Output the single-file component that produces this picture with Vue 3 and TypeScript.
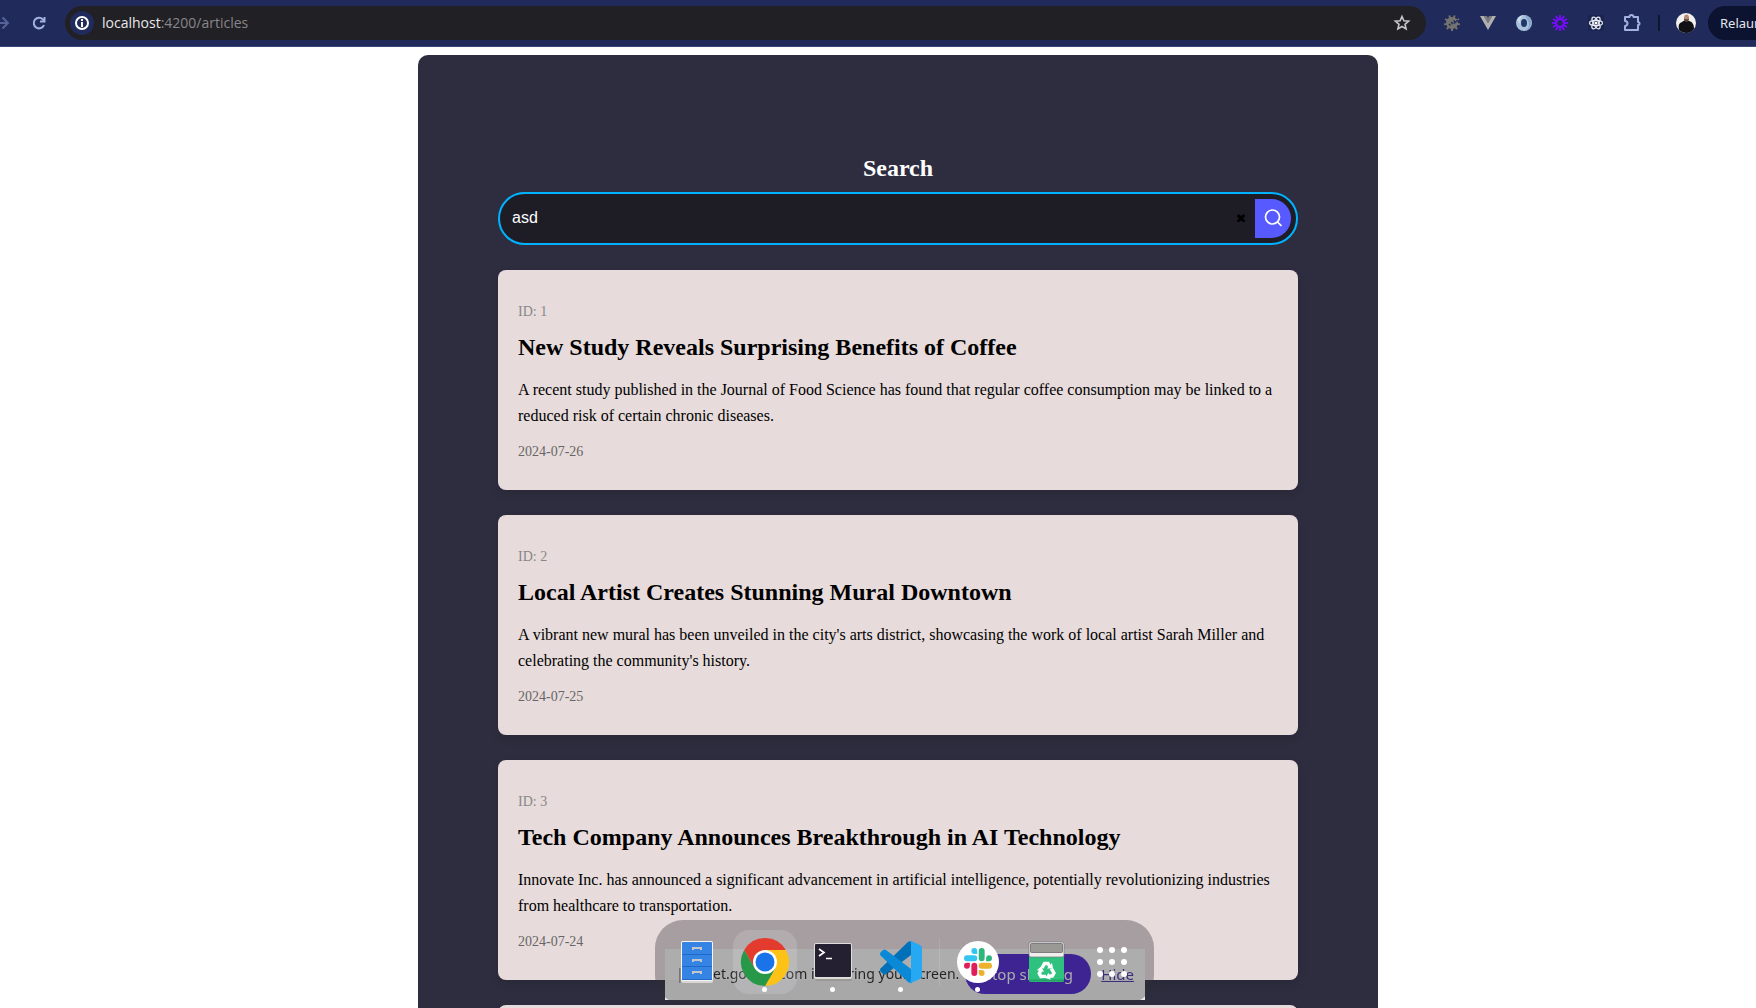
<script setup lang="ts">
import { ref } from 'vue'

interface Article {
  id: number
  title: string
  body: string
  date: string
}

const query = ref('asd')

const articles: Article[] = [
  {
    id: 1,
    title: 'New Study Reveals Surprising Benefits of Coffee',
    body: 'A recent study published in the Journal of Food Science has found that regular coffee consumption may be linked to a reduced risk of certain chronic diseases.',
    date: '2024-07-26',
  },
  {
    id: 2,
    title: 'Local Artist Creates Stunning Mural Downtown',
    body: "A vibrant new mural has been unveiled in the city's arts district, showcasing the work of local artist Sarah Miller and celebrating the community's history.",
    date: '2024-07-25',
  },
  {
    id: 3,
    title: 'Tech Company Announces Breakthrough in AI Technology',
    body: 'Innovate Inc. has announced a significant advancement in artificial intelligence, potentially revolutionizing industries from healthcare to transportation.',
    date: '2024-07-24',
  },
]

const rays = Array.from({ length: 12 }, (_, i) => i * 30)
const teeth = Array.from({ length: 9 }, (_, i) => i * 40)
const gridDots = [20, 32, 44].flatMap((y) => [18, 30, 42].map((x) => ({ x, y })))
</script>

<template>
  <div class="screen">
    <header class="toolbar">
      <button class="nav forward" type="button" aria-label="Forward">
        <svg width="10" height="14" viewBox="0 0 10 14" fill="none" stroke="#56639a" stroke-width="2"><path d="M0 7h8M2.500 1.500L8 7l-5.500 5.500" /></svg>
      </button>
      <button class="nav reload" type="button" aria-label="Reload">
        <svg width="16" height="16" viewBox="0 0 16 16" fill="none" stroke="#a3b1e0" stroke-width="2"><path d="M13 10a5.300 5.300 0 1 1-1-5.500L13.500 6" /><path d="M13.500 2v4.500H9" /></svg>
      </button>
      <div class="address">
        <span class="site-info">
          <svg width="14" height="14" viewBox="0 0 14 14"><circle cx="7" cy="7" r="6" fill="none" stroke="#fff" stroke-width="2" /><path d="M7 6v5M7 3v2" stroke="#fff" stroke-width="2" /></svg>
        </span>
        <span class="url"><b>localhost</b>:4200/articles</span>
        <button class="nav star" type="button" aria-label="Bookmark">
          <svg width="18" height="18" viewBox="0 0 18 18" fill="none" stroke="#c7c7c9" stroke-width="1.600"><path d="M9 2.500l1.900 4.300 4.700.400-3.600 3.100 1.100 4.600L9 12.500l-4.100 2.400L6 10.300 2.400 7.200l4.700-.400z" /></svg>
        </button>
      </div>
      <div class="extensions">
        <span class="ext">
          <svg width="18" height="18" viewBox="0 0 18 18"><circle cx="9" cy="9" r="6" fill="#74746f" /><g stroke="#74746f" stroke-width="2"><path v-for="r in teeth" :key="r" d="M9 1v4" :transform="`rotate(${r + 20} 9 9)`" /></g><path d="M8 8l2 2M10.500 6.500l1.500 1.500M6 10l1.500 1.500M11 9.500l4-3.500" stroke="#25305c" stroke-width="1.500" /></svg>
        </span>
        <span class="ext">
          <svg width="18" height="18" viewBox="0 0 18 18"><path d="M1 2h4l4 7 4-7h4L9 16z" fill="#b0b0ae" /><path d="M5 2h3l1 2 1-2h3L9 9z" fill="#7c7c80" /></svg>
        </span>
        <span class="ext">
          <svg width="18" height="18" viewBox="0 0 18 18"><circle cx="9" cy="9" r="8" fill="#a9c1dc" /><path d="M10 1.200a8 8 0 0 1-1 15.800c4-1 6-5 4.500-9-1-2.500-2-4.500-3.500-6.800z" fill="#86a6ca" /><path d="M2 6a8 8 0 0 1 7-5c-3 2-5 6-3 10z" fill="#c9daea" /><ellipse cx="9" cy="9" rx="3" ry="4" fill="#1f3868" /></svg>
        </span>
        <span class="ext">
          <svg width="18" height="18" viewBox="0 0 18 18" stroke="#7a0bff" stroke-width="1.800"><path v-for="r in rays" :key="r" d="M9 1v5" :transform="`rotate(${r} 9 9)`" /><circle cx="9" cy="9" r="3.800" fill="none" /></svg>
        </span>
        <span class="ext">
          <svg width="16" height="16" viewBox="0 0 16 16"><rect width="16" height="16" rx="2" fill="#1a2450" /><g fill="none" stroke="#e6e8ef" stroke-width="1.200"><ellipse cx="8" cy="8" rx="6.500" ry="2.600" /><ellipse cx="8" cy="8" rx="6.500" ry="2.600" transform="rotate(60 8 8)" /><ellipse cx="8" cy="8" rx="6.500" ry="2.600" transform="rotate(120 8 8)" /></g><circle cx="8" cy="8" r="1.500" fill="#fff" /></svg>
        </span>
        <span class="ext">
          <svg width="20" height="20" viewBox="0 0 20 20" fill="none" stroke="#a3b1e0" stroke-width="2" stroke-linejoin="round"><path d="M3 4h4.500a2 2 0 0 1 4 0H16v5a1.500 1.500 0 0 1 0 3v5H3v-4a2.500 2.500 0 0 0 0-5z" /></svg>
        </span>
      </div>
      <span class="divider"></span>
      <svg class="avatar" width="20" height="20" viewBox="0 0 20 20"><circle cx="10" cy="10" r="10" fill="#f3f1ef" /><path d="M3 17c-1-5 0-7 3-8l3-2 4 1c4 1 5 4 5 8a10 10 0 0 1-15 1z" fill="#111014" /><ellipse cx="10.500" cy="5" rx="2.500" ry="3.500" fill="#b98a72" /><path d="M8 5.500c1 1 4 1 5 0 0 4-5 4-5 0z" fill="#55423c" /></svg>
      <button class="relaunch" type="button">Relaunch</button>
    </header>

    <main class="page">
      <section class="panel">
        <form class="search" @submit.prevent>
          <label class="search-title" for="search">Search</label>
          <div class="search-box">
            <input id="search" v-model="query" type="text" autocomplete="off" />
            <button class="clear" type="button" aria-label="Clear" @click="query = ''">✖</button>
            <button class="go" type="submit" aria-label="Submit search">
              <svg width="18" height="20" viewBox="0 0 18 20" fill="none" stroke="#fff" stroke-width="1.700"><circle cx="8.500" cy="8" r="7" /><path d="M13.500 13l4 4" /></svg>
            </button>
          </div>
        </form>
        <article v-for="a in articles" :key="a.id" class="card">
          <p class="id">ID: {{ a.id }}</p>
          <h2>{{ a.title }}</h2>
          <p class="body">{{ a.body }}</p>
          <p class="date">{{ a.date }}</p>
        </article>
        <article class="card upcoming"></article>
      </section>
    </main>

    <aside class="notice">
      <span class="pause">||</span>
      <span class="message">meet.google.com is sharing your screen.</span>
      <button class="stop" type="button">Stop sharing</button>
      <a href="#">Hide</a>
    </aside>

    <nav class="dock" aria-label="Applications">
      <button class="app" type="button" aria-label="Files">
        <svg viewBox="0 0 64 64"><rect x="16" y="12" width="32" height="41" rx="2" fill="#d9d7d6" /><rect x="16" y="11" width="32" height="40" rx="2" fill="#f6f5f4" /><rect x="17" y="12" width="30" height="38" rx="1" fill="#3584e4" /><path d="M17 24.500h30M17 36.500h30M17 49.500h30" stroke="#1f68c8" /><path d="M28 20v-2h8v2M28 32v-2h8v2M28 44v-2h8v2" fill="none" stroke="#c3c7cd" stroke-width="2" /></svg>
      </button>
      <button class="app active" type="button" aria-label="Chrome">
        <svg viewBox="0 0 64 64"><path d="M11.200 20A24 24 0 0 1 52.800 20H32v12L21.600 38z" fill="#e33b2e" /><path d="M52.800 20A24 24 0 0 1 32 56L42.400 38 32 20z" fill="#fcc216" /><path d="M32 56A24 24 0 0 1 11.200 20L21.600 38H42.400z" fill="#279847" /><circle cx="32" cy="32" r="12" fill="#fff" /><circle cx="32" cy="32" r="9.500" fill="#1a73e8" /></svg>
        <i class="running"></i>
      </button>
      <button class="app" type="button" aria-label="Terminal">
        <svg viewBox="0 0 64 64"><rect x="14" y="16" width="37" height="35" rx="2" fill="#9a9996" /><rect x="13" y="13" width="38" height="36" rx="2" fill="#deddda" /><rect x="14" y="14" width="36" height="33" rx="1" fill="#241f31" /><path d="M18 19l5 3.500-5 3.500M25 28.500h6" fill="none" stroke="#fff" stroke-width="1.700" /></svg>
        <i class="running"></i>
      </button>
      <button class="app" type="button" aria-label="Code editor">
        <svg viewBox="0 0 64 64"><path d="M11.500 38.500L39 12q2-1.500 4-1l1 12.500L17 44q-1.500 1-3 0l-2.500-2.500q-1-1.500 0-3z" fill="#0070b8" /><path d="M11.500 25.500L39 52q2 1.500 4 1l1-12.500L17 20q-1.500-1-3 0l-2.500 2.500q-1 1.500 0 3z" fill="#0a8ad6" /><path d="M42 11l9 4q2 1 2 3v28q0 2-2 3l-9 4q-2 .500-3-1 3 2 3-2V14q0-4-3-2 1-1.500 3-1z" fill="#27a8f3" /></svg>
        <i class="running"></i>
      </button>
      <span class="separator"></span>
      <button class="app" type="button" aria-label="Slack">
        <svg viewBox="0 0 64 64"><circle cx="32" cy="32" r="21" fill="#fff" /><g transform="translate(18 18) scale(1.167)"><path fill="#e01e5a" d="M5.042 15.165a2.528 2.528 0 0 1-2.520 2.523A2.528 2.528 0 0 1 0 15.165a2.527 2.527 0 0 1 2.522-2.520h2.520v2.520zM6.313 15.165a2.527 2.527 0 0 1 2.521-2.520 2.527 2.527 0 0 1 2.521 2.520v6.313A2.528 2.528 0 0 1 8.834 24a2.528 2.528 0 0 1-2.521-2.522v-6.313z" /><path fill="#36c5f0" d="M8.834 5.042a2.528 2.528 0 0 1-2.521-2.520A2.528 2.528 0 0 1 8.834 0a2.528 2.528 0 0 1 2.521 2.522v2.520H8.834zM8.834 6.313a2.528 2.528 0 0 1 2.521 2.521 2.528 2.528 0 0 1-2.521 2.521H2.522A2.528 2.528 0 0 1 0 8.834a2.528 2.528 0 0 1 2.522-2.521h6.312z" /><path fill="#2eb67d" d="M18.956 8.834a2.528 2.528 0 0 1 2.522-2.521A2.528 2.528 0 0 1 24 8.834a2.528 2.528 0 0 1-2.522 2.521h-2.522V8.834zM17.688 8.834a2.528 2.528 0 0 1-2.523 2.521 2.527 2.527 0 0 1-2.520-2.521V2.522A2.527 2.527 0 0 1 15.165 0a2.528 2.528 0 0 1 2.523 2.522v6.312z" /><path fill="#ecb22e" d="M15.165 18.956a2.528 2.528 0 0 1 2.523 2.522A2.528 2.528 0 0 1 15.165 24a2.527 2.527 0 0 1-2.520-2.522v-2.522h2.520zM15.165 17.688a2.527 2.527 0 0 1-2.520-2.523 2.526 2.526 0 0 1 2.520-2.520h6.313A2.527 2.527 0 0 1 24 15.165a2.528 2.528 0 0 1-2.522 2.523h-6.313z" /></g></svg>
        <i class="running"></i>
      </button>
      <button class="app" type="button" aria-label="Trash">
        <svg viewBox="0 0 64 64"><path d="M15 25h35v25q0 2-2 2H17q-2 0-2-2z" fill="#2ec27e" /><path d="M15 50.500h35" stroke="#26a269" stroke-width="2" /><rect x="15" y="12" width="35" height="15" rx="2" fill="#f0efee" stroke="#77767b" stroke-width=".700" /><rect x="16.500" y="13.500" width="32" height="9" rx="1" fill="#9a9996" stroke="#5e5c64" stroke-width=".700" /><g fill="none" stroke="#fff" stroke-width="3.400"><g v-for="r in [0, 120, 240]" :key="r" :transform="`rotate(${r} 32.500 41)`"><path d="M28 38l2.500-4.500h3.500l2 3.500" /><path d="M33 38.500h6l-1-5.500z" fill="#fff" stroke="none" /></g></g></svg>
      </button>
      <button class="app" type="button" aria-label="Show applications">
        <svg viewBox="0 0 62 64" fill="#fff"><circle v-for="(d, i) in gridDots" :key="i" :cx="d.x" :cy="d.y" r="3" /></svg>
      </button>
    </nav>
  </div>
</template>

<style>
body {
  margin: 0;
  background: #fff;
}
</style>

<style scoped>
.screen {
  height: 100vh;
  display: flex;
  flex-direction: column;
  overflow: hidden;
  font-family: "Liberation Serif", serif;
}

button {
  border: 0;
  padding: 0;
  background: none;
  cursor: pointer;
}

svg {
  display: block;
  flex: none;
}

.toolbar {
  display: flex;
  align-items: center;
  flex: none;
  height: 46px;
  background: #202b5b;
  border-bottom: 1px solid #3b4979;
  font-family: "Noto Sans", sans-serif;
}

.reload {
  margin: 0 18px 0 21px;
}

.address {
  flex: 1;
  height: 34px;
  display: flex;
  align-items: center;
  gap: 8px;
  padding: 0 15px 0 5px;
  border-radius: 17px;
  background: #212025;
}

.site-info {
  width: 24px;
  height: 24px;
  display: grid;
  place-items: center;
  border-radius: 50%;
  background: #202b5b;
}

.url {
  flex: 1;
  padding-bottom: 1px;
  font-family: "Open Sans", sans-serif;
  font-size: 14px;
  color: #87868a;
}

.url b {
  font-weight: 400;
  color: #e8e8ea;
}

.extensions {
  display: flex;
  margin: 0 8px;
}

.ext {
  width: 36px;
  display: grid;
  place-items: center;
}

.divider {
  width: 2px;
  height: 16px;
  background: #0e1634;
}

.avatar {
  margin: 0 12px 0 16px;
}

.relaunch {
  width: 48px;
  height: 34px;
  padding-left: 12px;
  overflow: hidden;
  text-align: left;
  border-radius: 17px 0 0 17px;
  background: #0c1330;
  color: #e4e6ee;
  font: 13px "Noto Sans", sans-serif;
}

.page {
  flex: 1;
  min-height: 0;
  overflow: hidden;
  padding: 8px 0 0 40px;
}

.panel {
  box-sizing: border-box;
  max-width: 960px;
  margin: 0 auto;
  padding: 100px 80px 80px;
  border-radius: 10px;
  background: #2e2d3f;
}

.search-title {
  display: block;
  margin-bottom: 10px;
  text-align: center;
  font-size: 24px;
  line-height: 27px;
  font-weight: 700;
  color: #fff;
}

.search-box {
  display: flex;
  align-items: center;
  height: 49px;
  margin-bottom: 25px;
  padding-right: 5px;
  border: 2px solid #00b2ff;
  border-radius: 27px;
  background: #1e1d26;
}

.search-box input {
  flex: 1;
  min-width: 0;
  height: 40px;
  box-sizing: border-box;
  padding: 0 12px 2px;
  border: 0;
  outline: 0;
  background: transparent;
  color: #fff;
  font: 16px "Liberation Sans", sans-serif;
}

.clear {
  width: 28px;
  color: #000;
  font: 13px "DejaVu Sans", sans-serif;
}

.go {
  width: 36px;
  height: 39px;
  display: grid;
  place-items: center;
  border-radius: 0 20px 20px 0;
  background: #575bff;
}

.card {
  margin-bottom: 25px;
  padding: 34px 20px 30px;
  border-radius: 8px;
  background: #e7dbdb;
  box-shadow: 0 4px 8px rgba(0, 0, 0, 0.1);
}

.card h2 {
  margin: 14px 0 16px;
  font-size: 24px;
  line-height: 27px;
}

.card p {
  margin: 0;
}

.card .id,
.card .date {
  font-size: 14px;
  line-height: 16px;
}

.card .id {
  color: #888;
}

.card .body {
  margin-bottom: 15px;
  font-size: 16px;
  line-height: 26px;
  color: #000;
}

.card .date {
  color: #666;
}

.upcoming {
  min-height: 156px;
}

.notice {
  position: fixed;
  left: calc(50% - 213px);
  bottom: 8px;
  box-sizing: border-box;
  width: 480px;
  height: 51px;
  display: flex;
  align-items: center;
  padding: 0 11px 2px;
  background: rgba(242, 243, 240, 0.96);
  color: #1f1f1f;
  font: 14px "Noto Sans", sans-serif;
  white-space: nowrap;
}

.pause {
  width: 16px;
  color: #777;
}

.message {
  flex: 1;
}

.stop {
  width: 126px;
  height: 40px;
  margin-right: 10px;
  border-radius: 20px;
  background: #4720c6;
  color: #eee;
  font: 15px "Noto Sans", sans-serif;
}

.notice a {
  font-size: 15px;
  color: #3f2fa0;
}

.dock {
  position: fixed;
  left: calc(50% - 223px);
  bottom: 4px;
  display: flex;
  align-items: center;
  gap: 4px;
  padding: 10px;
  border-radius: 28px;
  background: rgba(46, 45, 52, 0.35);
}

.app {
  position: relative;
  width: 64px;
  height: 64px;
  border-radius: 16px;
}

.app:last-child {
  width: 62px;
}

.app svg {
  width: 100%;
  height: 64px;
}

.active {
  background: rgba(255, 255, 255, 0.14);
}

.running {
  position: absolute;
  left: 29px;
  bottom: 2px;
  width: 5px;
  height: 5px;
  border-radius: 50%;
  background: #fff;
}

.separator {
  width: 1px;
  height: 48px;
  margin: 0 2px;
  background: rgba(255, 255, 255, 0.1);
}
</style>
